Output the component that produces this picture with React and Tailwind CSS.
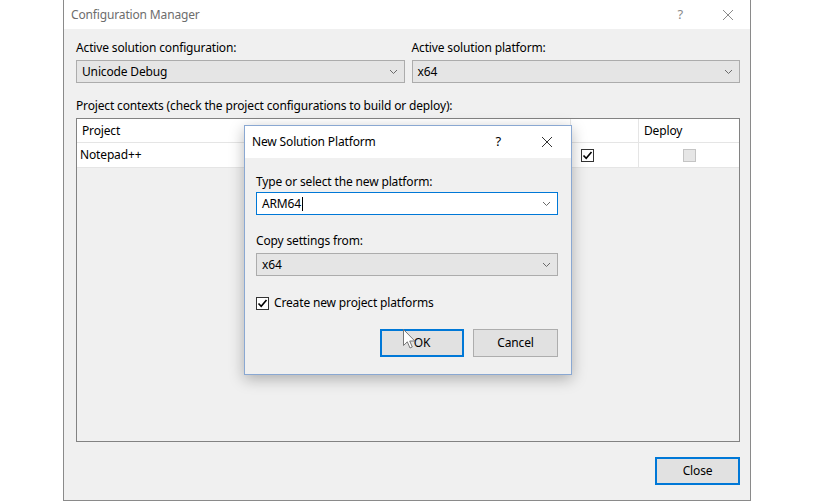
import React from 'react';

const Chevron = () => (
  <svg width="9" height="6" viewBox="0 0 9 6" className="shrink-0">
    <path d="M1 1 L4.5 4.5 L8 1" fill="none" stroke="#6a6a6a" strokeWidth="1" />
  </svg>
);

const Combo = ({ value, className = '' }) => (
  <div
    className={`flex items-center justify-between h-[23px] pl-[5px] pr-[6px] border border-[#acacac] bg-[#e5e5e5] text-[12px] text-black ${className}`}
  >
    <span>{value}</span>
    <Chevron />
  </div>
);

const CheckMark = () => (
  <svg width="11" height="11" viewBox="0 0 11 11">
    <path d="M1.5 5.5 L4.2 8.3 L9.5 2" fill="none" stroke="#000" strokeWidth="1.6" />
  </svg>
);

const TitleX = ({ color = '#555' }) => (
  <svg width="12" height="12" viewBox="0 0 12 12">
    <path d="M1 1 L11 11 M11 1 L1 11" stroke={color} strokeWidth="1" />
  </svg>
);

const Cursor = () => (
  <svg width="13" height="21" viewBox="0 0 13 21" className="absolute left-[158px] top-[203px]">
    <path
      d="M0.5 0.5 L0.5 16.5 L4.3 12.8 L7 19 L9.3 18 L6.7 12 L11.8 12 Z"
      fill="#fff"
      stroke="#777"
      strokeWidth="1"
    />
  </svg>
);

const App = () => {
  return (
    <div
      className="w-[814px] h-[501px] bg-white overflow-hidden tracking-[-0.15px]"
      style={{ fontFamily: '"Noto Sans", "Open Sans", sans-serif' }}
    >
      <div className="relative ml-[63px] w-[688px] h-[501px] flex flex-col border-x border-b border-[#8a8a8a]">
        {/* title bar */}
        <div className="h-[29px] bg-white flex items-center pl-[7px] pr-[16px] shrink-0">
          <span className="text-[12px] text-[#6d6d6d] flex-1">Configuration Manager</span>
          <span className="text-[13px] text-[#8a8a8a] mr-[39px]">?</span>
          <TitleX color="#8a8a8a" />
        </div>

        {/* body */}
        <div className="flex-1 bg-[#f0f0f0] flex flex-col pl-[12px] pr-[10px] pt-[10px] pb-[15px] text-[12px] text-black">
          <div className="grid grid-cols-2 gap-x-[7px]">
            <div className="flex flex-col">
              <span className="h-[17px] leading-[17px] mb-[4px]">Active solution configuration:</span>
              <Combo value="Unicode Debug" />
            </div>
            <div className="flex flex-col">
              <span className="h-[17px] leading-[17px] mb-[4px]">Active solution platform:</span>
              <Combo value="x64" />
            </div>
          </div>

          <span className="h-[17px] leading-[17px] mt-[14px] mb-[4px]">
            Project contexts (check the project configurations to build or deploy):
          </span>

          {/* table */}
          <div className="h-[324px] border border-[#828282] bg-[#f0f0f0] flex flex-col">
            <div className="h-[24px] bg-white flex border-b border-[#e5e5e5]">
              <div className="flex-1 pl-[5px] flex items-center">Project</div>
              <div className="w-[68px] border-l border-[#e5e5e5]"></div>
              <div className="w-[101px] border-l border-[#e5e5e5] pl-[5px] flex items-center">Deploy</div>
            </div>
            <div className="h-[25px] bg-white flex border-b border-[#e5e5e5]">
              <div className="flex-1 pl-[3px] flex items-center">Notepad++</div>
              <div className="w-[68px] border-l border-[#e5e5e5] flex items-center pl-[10px]">
                <div className="w-[13px] h-[13px] border border-[#333] bg-white flex items-center justify-center">
                  <CheckMark />
                </div>
              </div>
              <div className="w-[101px] border-l border-[#e5e5e5] flex items-center justify-center">
                <div className="w-[13px] h-[13px] border border-[#c4c4c4] bg-[#e6e6e6]"></div>
              </div>
            </div>
          </div>

          <div className="flex justify-end mt-[15px]">
            <button className="w-[85px] h-[28px] bg-[#e1e1e1] border-2 border-[#0078d7] text-[12px]">
              Close
            </button>
          </div>
        </div>

        {/* New Solution Platform dialog */}
        <div className="absolute left-[180px] top-[125px] w-[328px] h-[250px] flex flex-col border border-[#8aa8d2] bg-[#f0f0f0] shadow-[0_4px_14px_rgba(0,0,0,0.28)] text-[12px] text-black">
          <div className="h-[32px] bg-white flex items-center pl-[7px] pr-[18px] shrink-0">
            <span className="flex-1 text-[12px]">New Solution Platform</span>
            <span className="text-[13px] mr-[40px]">?</span>
            <TitleX color="#333" />
          </div>
          <div className="flex flex-col pl-[11px] pr-[13px] pt-[15px]">
            <span className="h-[17px] leading-[17px] mb-[2px]">Type or select the new platform:</span>
            <div className="flex items-center justify-between h-[23px] pl-[5px] pr-[6px] border border-[#0078d7] bg-white">
              <span className="flex items-center">
                ARM64<span className="inline-block w-px h-[14px] bg-black ml-px"></span>
              </span>
              <Chevron />
            </div>
            <span className="h-[17px] leading-[17px] mt-[17px] mb-[4px]">Copy settings from:</span>
            <Combo value="x64" />
            <div className="flex items-center mt-[18px] gap-[5px]">
              <div className="w-[13px] h-[13px] border border-[#333] bg-white flex items-center justify-center">
                <CheckMark />
              </div>
              <span>Create new project platforms</span>
            </div>
            <div className="flex justify-end gap-[9px] mt-[17px]">
              <button className="w-[84px] h-[28px] bg-[#e1e1e1] border-2 border-[#0078d7] text-[12px]">OK</button>
              <button className="w-[85px] h-[28px] bg-[#e1e1e1] border border-[#adadad] text-[12px]">Cancel</button>
            </div>
          </div>
          <Cursor />
        </div>
      </div>
    </div>
  );
};

export default App;
